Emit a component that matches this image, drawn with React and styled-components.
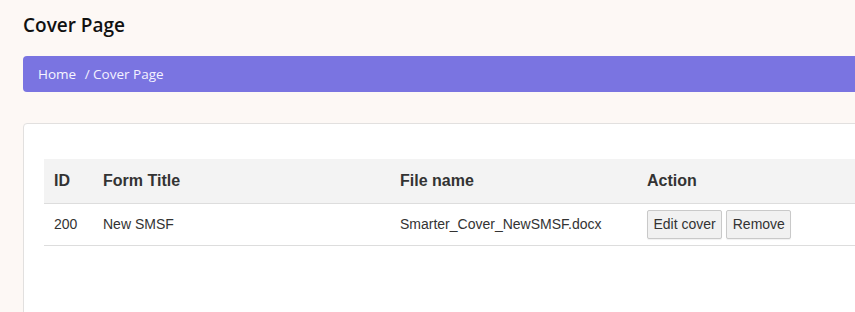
import React from "react";
import styled, { createGlobalStyle } from "styled-components";

const Global = createGlobalStyle`
  html, body { margin: 0; padding: 0; background: #fdf8f5; overflow: hidden; }
  body { font-family: "Open Sans", "Noto Sans", sans-serif; }
`;

const Page = styled.div`
  width: 1100px;
  padding: 12px 0 0 23px;
  box-sizing: border-box;
`;

const Title = styled.h1`
  margin: 0;
  font-size: 19px;
  font-weight: 600;
  color: #111;
  line-height: 26px;
  font-family: "Open Sans", "Noto Sans", sans-serif;
`;

const Breadcrumb = styled.nav`
  margin-top: 18px;
  height: 36px;
  background: #7a74e1;
  border-radius: 4px;
  display: flex;
  align-items: center;
  padding-left: 15px;
  font-size: 13.5px;
  color: #f4f2ff;
  gap: 5px;
`;

const Crumb = styled.span`
  color: ${(p) => (p.$active ? "#f4f2ff" : "#f7f6ff")};
`;

const Card = styled.section`
  margin-top: 31px;
  background: #fff;
  border: 1px solid #e2e0df;
  border-radius: 4px;
  padding: 35px 20px 100px 20px;
  font-family: "Liberation Sans", Arial, sans-serif;
`;

const Table = styled.table`
  width: 100%;
  border-collapse: collapse;
  color: #333;
`;

const HeadCell = styled.th`
  text-align: left;
  font-size: 16px;
  font-weight: bold;
  background: #f3f3f3;
  height: 44px;
  padding: 0 10px;
  border-bottom: 1px solid #dddddd;
  width: ${(p) => p.$w || "auto"};
  box-sizing: border-box;
`;

const Cell = styled.td`
  font-size: 14px;
  height: 41px;
  padding: 0 10px;
  border-bottom: 1px solid #dddddd;
`;

const Btn = styled.button`
  font-family: "Liberation Sans", Arial, sans-serif;
  font-size: 14px;
  color: #333;
  background: #f1f1f1;
  border: 1px solid #c9c9c9;
  border-radius: 2px;
  height: 29px;
  padding: 0 5.5px;
  margin-right: 4px;
  box-shadow: 0 1px 1px rgba(0,0,0,0.06);
`;

export default function App() {
  return (
    <>
      <Global />
      <Page>
        <Title>Cover Page</Title>
        <Breadcrumb>
          <Crumb>Home</Crumb>
          <Crumb $active>&nbsp;/ Cover Page</Crumb>
        </Breadcrumb>
        <Card>
          <Table>
            <thead>
              <tr>
                <HeadCell $w="49px">ID</HeadCell>
                <HeadCell $w="297px">Form Title</HeadCell>
                <HeadCell $w="247px">File name</HeadCell>
                <HeadCell>Action</HeadCell>
              </tr>
            </thead>
            <tbody>
              <tr>
                <Cell>200</Cell>
                <Cell>New SMSF</Cell>
                <Cell>Smarter_Cover_NewSMSF.docx</Cell>
                <Cell>
                  <Btn>Edit cover</Btn>
                  <Btn>Remove</Btn>
                </Cell>
              </tr>
            </tbody>
          </Table>
        </Card>
      </Page>
    </>
  );
}
